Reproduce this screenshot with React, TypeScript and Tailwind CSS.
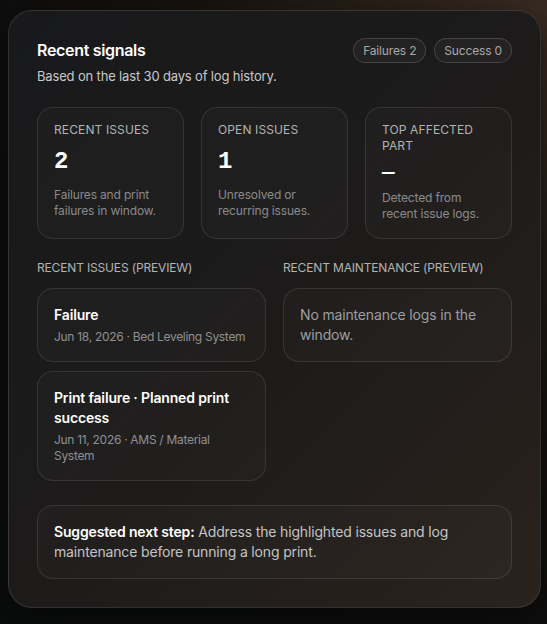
import React from "react";

const stats = [
  { label: "Recent issues", value: "2", note: "Failures and print failures in window." },
  { label: "Open issues", value: "1", note: "Unresolved or recurring issues." },
  { label: "Top affected part", value: "—", note: "Detected from recent issue logs.", compact: true },
];

const issues = [
  { title: "Failure", meta: "Jun 18, 2026 · Bed Leveling System" },
  { title: "Print failure · Planned print success", meta: "Jun 11, 2026 · AMS / Material System" },
];

function StatCard({ label, value, note, compact }: { label: string; value: string; note: string; compact?: boolean }) {
  return (
    <div className="rounded-2xl border border-white/10 bg-white/[0.02] px-4 pt-[14px] pb-4">
      <div className="text-[12px] leading-4 uppercase tracking-[0.01em] text-[#b3b3b3]">{label}</div>
      {compact ? (
        <div className="mt-[9px] font-['Liberation_Mono',monospace] text-[21px] leading-5 font-bold text-white">
          {value}
        </div>
      ) : (
        <div className="mt-2 font-['Liberation_Mono',monospace] text-[24px] leading-8 font-bold text-white">
          {value}
        </div>
      )}
      <div className={`${compact ? "mt-[7px]" : "mt-[9px]"} text-[12px] leading-4 text-[#8a8b8d]`}>{note}</div>
    </div>
  );
}

export default function App() {
  return (
    <div className="min-h-[624px] w-full bg-[radial-gradient(ellipse_at_top_right,#3a2c22_0%,#17130f_45%,#0b0c0d_80%)] pl-2 pr-[6px] py-[10px] font-['Inter',sans-serif] tracking-[-0.01em]">
      <div className="rounded-[24px] border border-white/10 bg-[linear-gradient(135deg,#18191b_0%,#1d1b1a_55%,#2a221d_100%)] px-7 pt-[27px] pb-[28px] shadow-[0_10px_40px_rgba(0,0,0,0.5)]">
        {/* header */}
        <div className="flex items-start justify-between">
          <div>
            <h2 className="text-[16px] leading-6 font-semibold tracking-[-0.02em] text-white">Recent signals</h2>
            <p className="mt-1 text-[13px] leading-5 text-[#c9c9c9]">
              Based on the last 30 days of log history.
            </p>
          </div>
          <div className="flex gap-2">
            <span className="rounded-full border border-white/15 bg-white/[0.04] px-[9px] py-[2px] text-[12px] leading-[19px] text-[#a9a9a9]">
              Failures 2
            </span>
            <span className="rounded-full border border-white/15 bg-white/[0.04] px-[9px] py-[2px] text-[12px] leading-[19px] text-[#a9a9a9]">
              Success 0
            </span>
          </div>
        </div>

        {/* stats */}
        <div className="mt-[21px] grid grid-cols-3 gap-[17px]">
          {stats.map((s) => (
            <StatCard key={s.label} {...s} />
          ))}
        </div>

        {/* previews */}
        <div className="mt-[21px] grid grid-cols-2 gap-[17px]">
          <div>
            <div className="text-[12px] leading-4 uppercase text-[#b3b3b3]">Recent issues (preview)</div>
            <div className="mt-3 flex flex-col gap-[9px]">
              {issues.map((i) => (
                <div key={i.title} className="rounded-2xl border border-white/10 bg-white/[0.02] px-4 py-4">
                  <div className="text-[14px] leading-5 font-semibold text-white">{i.title}</div>
                  <div className="mt-1 text-[12px] leading-4 tracking-[-0.025em] text-[#8f9092]">{i.meta}</div>
                </div>
              ))}
            </div>
          </div>
          <div>
            <div className="text-[12px] leading-4 uppercase text-[#b3b3b3]">Recent maintenance (preview)</div>
            <div className="mt-3 rounded-2xl border border-white/10 bg-white/[0.02] px-4 py-4">
              <p className="text-[14px] leading-5 text-[#9d9e9f]">No maintenance logs in the window.</p>
            </div>
          </div>
        </div>

        {/* suggestion */}
        <div className="mt-6 rounded-2xl border border-white/10 bg-white/[0.02] px-4 py-4">
          <p className="text-[14px] leading-5 text-[#c4c4c4]">
            <span className="font-semibold text-white">Suggested next step:</span> Address the highlighted issues
            and log maintenance before running a long print.
          </p>
        </div>
      </div>
    </div>
  );
}
